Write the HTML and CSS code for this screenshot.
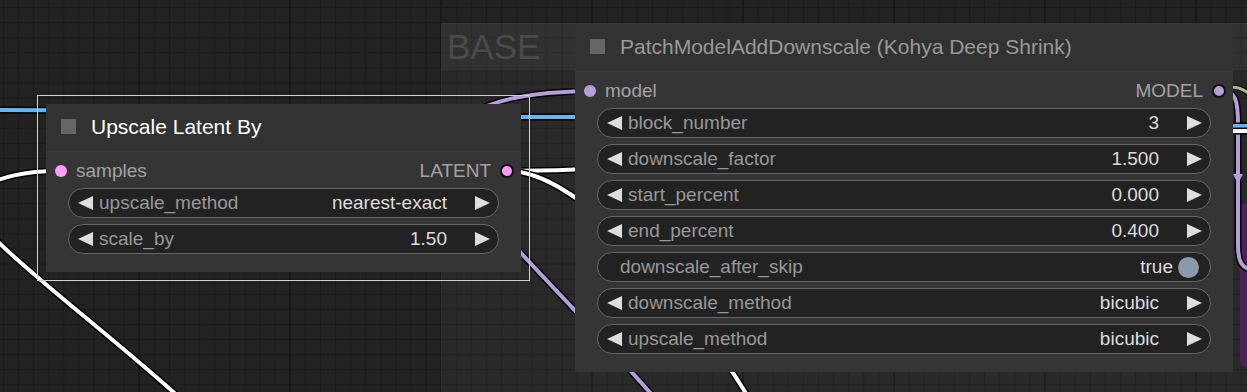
FILE: index.html
```html
<!DOCTYPE html>
<html>
<head>
    <meta charset="utf-8">
    <link rel="stylesheet" href="styles.css">
</head>
<body>
    <div class="canvas">
        <div class="group">
            <div class="group_title">BASE</div>
        </div>

        <div class="side_node"></div>

        <svg class="links" width="1247" height="392" viewBox="0 0 1247 392">
            <!-- MODEL -> model input (loops behind both nodes) -->
            <path class="shadow" d="M 600 91 C 400 91, 440 170, 498 228 C 540 275, 610 345, 665 410" />
            <path class="wire purple" d="M 600 91 C 400 91, 440 170, 498 228 C 540 275, 610 345, 665 410" />

            <!-- MODEL output going off to the right -->
            <path class="shadow" d="M 1219 90 C 1236 90, 1238 100, 1238 125 L 1238 245 C 1238 262, 1242 268, 1252 270" />
            <path class="wire purple" d="M 1219 90 C 1236 90, 1238 100, 1238 125 L 1238 245 C 1238 262, 1242 268, 1252 270" />
            <polygon class="marker" points="1233,174 1243,174 1238,184" />
            <path class="shadow thin" d="M 1226 88 C 1236 86, 1243 88, 1252 96" />
            <path class="wire green" d="M 1226 88 C 1236 86, 1243 88, 1252 96" />

            <!-- blue link passing under both nodes -->
            <path class="shadow" d="M -10 110 C 250 110, 320 117, 540 117 L 620 117 C 900 117, 1100 126, 1260 126" />
            <path class="wire blue" d="M -10 110 C 250 110, 320 117, 540 117 L 620 117 C 900 117, 1100 126, 1260 126" />

            <!-- LATENT output links -->
            <path class="shadow" d="M 508 171 C 700 171, 1000 131, 1260 131" />
            <path class="wire white" d="M 508 171 C 700 171, 1000 131, 1260 131" />
            <path class="shadow" d="M 508 171 C 580 171, 690 300, 750 400" />
            <path class="wire white" d="M 508 171 C 580 171, 690 300, 750 400" />

            <!-- link into samples, looping in from off-canvas -->
            <path class="shadow" d="M 60 171 C 20 171, 5 177, -30 190" />
            <path class="wire white" d="M 60 171 C 20 171, 5 177, -30 190" />
            <path class="shadow" d="M -8 236 C 30 275, 110 335, 180 398" />
            <path class="wire white" d="M -8 236 C 30 275, 110 335, 180 398" />
        </svg>

        <div class="node node_upscale selected">
            <div class="node_title">
                <span class="title_box"></span>
                <span class="title_text">Upscale Latent By</span>
            </div>
            <div class="node_body">
                <div class="slot_row">
                    <span class="slot_in latent"></span>
                    <span class="slot_label">samples</span>
                    <span class="slot_label out">LATENT</span>
                    <span class="slot_out latent"></span>
                </div>
                <div class="widgets">
                    <div class="widget">
                        <span class="arrow_left"></span>
                        <span class="w_label">upscale_method</span>
                        <span class="w_value">nearest-exact</span>
                        <span class="arrow_right"></span>
                    </div>
                    <div class="widget">
                        <span class="arrow_left"></span>
                        <span class="w_label">scale_by</span>
                        <span class="w_value">1.50</span>
                        <span class="arrow_right"></span>
                    </div>
                </div>
            </div>
        </div>

        <div class="node node_patch">
            <div class="node_title">
                <span class="title_box"></span>
                <span class="title_text">PatchModelAddDownscale (Kohya Deep Shrink)</span>
            </div>
            <div class="node_body">
                <div class="slot_row">
                    <span class="slot_in model"></span>
                    <span class="slot_label">model</span>
                    <span class="slot_label out">MODEL</span>
                    <span class="slot_out model"></span>
                </div>
                <div class="widgets">
                    <div class="widget">
                        <span class="arrow_left"></span>
                        <span class="w_label">block_number</span>
                        <span class="w_value">3</span>
                        <span class="arrow_right"></span>
                    </div>
                    <div class="widget">
                        <span class="arrow_left"></span>
                        <span class="w_label">downscale_factor</span>
                        <span class="w_value">1.500</span>
                        <span class="arrow_right"></span>
                    </div>
                    <div class="widget">
                        <span class="arrow_left"></span>
                        <span class="w_label">start_percent</span>
                        <span class="w_value">0.000</span>
                        <span class="arrow_right"></span>
                    </div>
                    <div class="widget">
                        <span class="arrow_left"></span>
                        <span class="w_label">end_percent</span>
                        <span class="w_value">0.400</span>
                        <span class="arrow_right"></span>
                    </div>
                    <div class="widget toggle">
                        <span class="w_label">downscale_after_skip</span>
                        <span class="w_value">true</span>
                        <span class="toggle_knob"></span>
                    </div>
                    <div class="widget">
                        <span class="arrow_left"></span>
                        <span class="w_label">downscale_method</span>
                        <span class="w_value">bicubic</span>
                        <span class="arrow_right"></span>
                    </div>
                    <div class="widget">
                        <span class="arrow_left"></span>
                        <span class="w_label">upscale_method</span>
                        <span class="w_value">bicubic</span>
                        <span class="arrow_right"></span>
                    </div>
                </div>
            </div>
        </div>
    </div>
</body>
</html>
```

FILE: styles.css
```css
html {
    box-sizing: border-box;
    height: 100%;
}

body {
    margin: 0;
    font-family: 'Liberation Sans', Arial, sans-serif;
    background-color: #222222;
    overflow: hidden;
}

.canvas {
    position: relative;
    width: 1247px;
    height: 392px;
    overflow: hidden;
    background-color: #222222;
    background-image:
        linear-gradient(90deg, #181818 2px, transparent 2px),
        linear-gradient(#1b1b1b 1px, transparent 1px),
        linear-gradient(90deg, #1b1b1b 1px, transparent 1px);
    background-size: 151px 151px, 15.1px 15.1px, 15.1px 15.1px;
    background-position: 138px 0, 0 7px, 3px 0;
}

/* group */
.group {
    position: absolute;
    left: 441px;
    top: 23px;
    width: 830px;
    height: 400px;
    background-color: rgba(255, 255, 255, 0.035);
    border: 1px solid rgba(255, 255, 255, 0.07);
    box-sizing: border-box;
}

    .group .group_title {
        height: 46px;
        display: flex;
        align-items: center;
        padding-left: 5px;
        font-size: 35px;
        color: #4b4b4b;
        background-color: rgba(255, 255, 255, 0.04);
    }

.side_node {
    position: absolute;
    left: 1240px;
    top: 203px;
    width: 30px;
    height: 165px;
    border-radius: 7px;
    background-color: #4b2453;
}

/* links */
.links {
    position: absolute;
    left: 0;
    top: 0;
}

    .links path {
        fill: none;
        stroke-linecap: butt;
    }

    .links .shadow {
        stroke: #000000;
        stroke-width: 7;
    }

        .links .shadow.thin {
            stroke-width: 5;
        }

    .links .wire {
        stroke-width: 4;
    }

    .links .purple {
        stroke: #b39ddb;
    }

    .links .blue {
        stroke: #64b5f6;
    }

    .links .white {
        stroke: #ffffff;
    }

    .links .green {
        stroke: #a7b795;
        stroke-width: 3;
    }

    .links .marker {
        fill: #b39ddb;
    }

/* nodes */
.node {
    position: absolute;
    background-color: #353535;
}

.node_upscale {
    left: 46px;
    top: 104px;
    width: 475px;
}

.node_patch {
    left: 575px;
    top: 24px;
    width: 658px;
}

.node.selected {
    outline: 1px solid #cfcfcf;
    outline-offset: 8px;
}

.node_title {
    height: 45px;
    display: flex;
    align-items: center;
    padding-left: 15px;
    background-color: #323232;
    border-bottom: 1px solid #2c2c2c;
}

    .node_title .title_box {
        width: 15px;
        height: 15px;
        background-color: #666666;
        margin-right: 15px;
    }

    .node_title .title_text {
        font-size: 21px;
        color: #999999;
    }

.selected .node_title .title_text {
    color: #ffffff;
}

.node_body {
    padding: 6px 0 18px 0;
}

.slot_row {
    height: 30px;
    display: flex;
    align-items: center;
    padding: 0 7px 0 9px;
    font-size: 19px;
    color: #a3a3a3;
}

    .slot_row .slot_label {
        flex: 1;
        margin-left: 9px;
    }

        .slot_row .slot_label.out {
            text-align: right;
            margin-left: 0;
            margin-right: 9px;
        }

.slot_in {
    width: 12px;
    height: 12px;
    border-radius: 50%;
}

.slot_out {
    width: 10px;
    height: 10px;
    border-radius: 50%;
    border: 2px solid #111111;
}

.latent {
    background-color: #ff9cf9;
}

.model {
    background-color: #b39ddb;
}

.widgets {
    margin-top: 2px;
    padding: 0 22px;
    display: flex;
    flex-direction: column;
    gap: 6px;
}

.widget {
    height: 30px;
    box-sizing: border-box;
    border: 1px solid #666666;
    border-radius: 15px;
    background-color: #222222;
    display: flex;
    align-items: center;
    padding: 0 8px 0 9px;
    font-size: 19px;
}

    .widget .w_label {
        flex: 1;
        color: #999999;
        margin-left: 6px;
    }

    .widget .w_value {
        color: #dddddd;
        margin-right: 28px;
    }

.arrow_left {
    width: 0;
    height: 0;
    border-top: 7px solid transparent;
    border-bottom: 7px solid transparent;
    border-right: 15px solid #dddddd;
}

.arrow_right {
    width: 0;
    height: 0;
    border-top: 7px solid transparent;
    border-bottom: 7px solid transparent;
    border-left: 15px solid #dddddd;
}

.widget.toggle {
    padding: 0 11px 0 22px;
}

    .widget.toggle .w_label {
        margin-left: 0;
    }

    .widget.toggle .w_value {
        margin-right: 5px;
    }

.toggle_knob {
    width: 21px;
    height: 21px;
    border-radius: 50%;
    background-color: #8a9aaa;
}
```
